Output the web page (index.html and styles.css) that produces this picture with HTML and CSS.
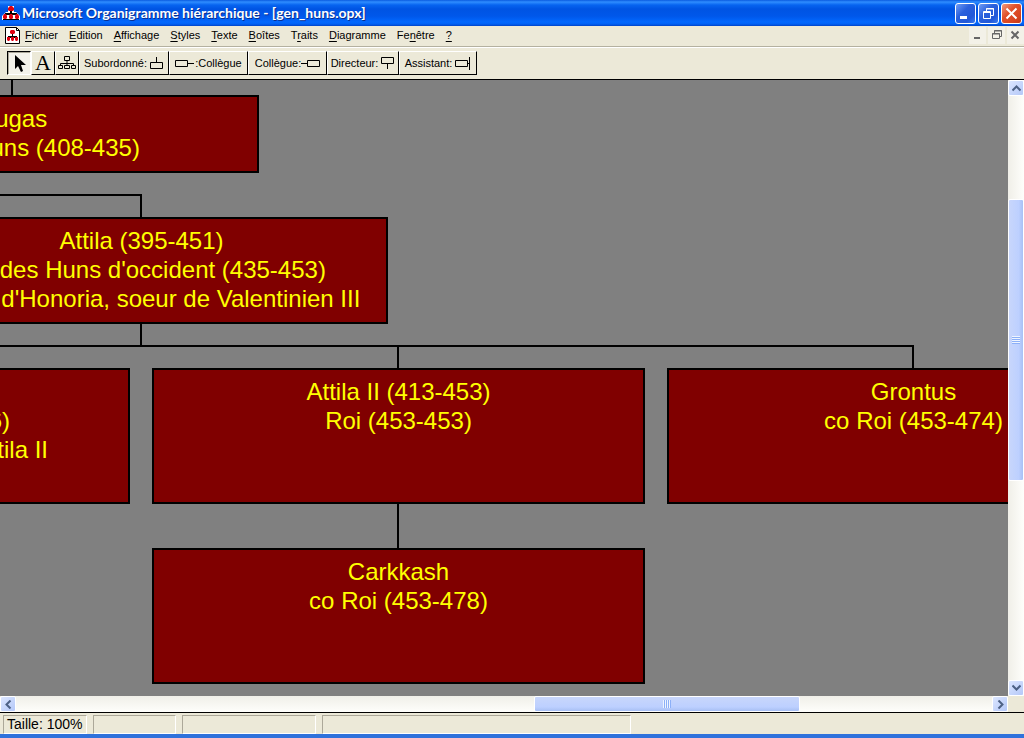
FILE: index.html
```
<!DOCTYPE html>
<html lang="fr">
<head>
<meta charset="utf-8">
<title>Microsoft Organigramme hiérarchique - [gen_huns.opx]</title>
<link rel="stylesheet" href="styles.css">
</head>
<body>
<div class="window">
  <header class="titlebar">
    <svg class="logo" width="18" height="16" viewBox="0 0 18 16">
      <path d="M6 1h6v6h2l4 4v4H0v-4l4-4h2z" fill="#fff"/>
      <path d="M8 6h2v2h5v2H3V8h5zM1 14h16v1H1z" fill="#000"/>
      <g fill="#e00010"><path d="M8 1h2l2 2v2l-1 1H7L6 5V3z"/><path d="M2 9h2l1 2v2l-1 1H2l-1-1v-2z"/><path d="M8 9h2l1 2v2l-1 1H8l-1-1v-2z"/><path d="M14 9h2l1 2v2l-1 1h-2l-1-1v-2z"/></g>
    </svg>
    <h1 class="title">Microsoft Organigramme hiérarchique - [gen_huns.opx]</h1>
    <div class="caption-buttons">
      <button class="cap" aria-label="Réduire"><svg width="19" height="19"><path d="M4 12h7v3H4z" fill="#fff"/></svg></button>
      <button class="cap" aria-label="Restaurer"><svg width="19" height="19" fill="none" stroke="#fff"><path d="M7.500 7V4.500h7v7H12M7 5h8M4 8.500h8"/><path d="M4.500 7.500h7v7h-7z"/></svg></button>
      <button class="cap cap-close" aria-label="Fermer"><svg width="19" height="19"><path d="M4.500 4.500l10 10M14.500 4.500l-10 10" stroke="#fff" stroke-width="2"/></svg></button>
    </div>
  </header>
  <nav class="menubar">
    <svg class="doc" width="15" height="17" viewBox="0 0 15 17">
      <path d="M.5.500h11l3 3v13H.5z" fill="#fff" stroke="#000"/>
      <path d="M11.500.500v3h3" fill="none" stroke="#000"/>
      <path d="M7 6h1v3h4v2H3V9h4z" fill="#000"/>
      <g fill="#e00010"><path d="M6 3h3l1 1v2l-1 1H6L5 6V4z"/><path d="M2 10h3v3l-1 1H3l-1-1z"/><path d="M6 10h3v3l-1 1H7l-1-1z"/><path d="M10 10h3v3l-1 1h-1l-1-1z"/></g>
    </svg>
    <div class="menus">
      <button class="menu"><u>F</u>ichier</button>
      <button class="menu"><u>E</u>dition</button>
      <button class="menu"><u>A</u>ffichage</button>
      <button class="menu"><u>S</u>tyles</button>
      <button class="menu"><u>T</u>exte</button>
      <button class="menu"><u>B</u>oîtes</button>
      <button class="menu">T<u>r</u>aits</button>
      <button class="menu"><u>D</u>iagramme</button>
      <button class="menu">Fe<u>n</u>être</button>
      <button class="menu"><u>?</u></button>
    </div>
    <div class="mdi-buttons">
      <button class="mdi" aria-label="Réduire le document"><svg width="16" height="16"><path d="M5 10h6v2H5z" fill="#666"/></svg></button>
      <button class="mdi" aria-label="Restaurer le document"><svg width="16" height="16" fill="none" stroke="#666"><path d="M6.500 6V3.500h7v6H12M6 4h8M4 7h8M4.500 6.500h7v5h-7z"/></svg></button>
      <button class="mdi" aria-label="Fermer le document"><svg width="16" height="16"><path d="M4.500 4.500l7 7M11.500 4.500l-7 7" stroke="#666" stroke-width="2"/></svg></button>
    </div>
  </nav>
  <div class="toolbar">
    <button class="tool tool-icon pressed" aria-label="Sélection"><svg width="20" height="20"><path d="M6 2v14l3-3 3 6 2-1-2-6h5z" fill="#000"/></svg></button>
    <button class="tool tool-icon letter">A</button>
    <button class="tool tool-icon" aria-label="Organigramme"><svg width="18" height="14" fill="none" stroke="#000"><path d="M6.500.500h5v4h-5zM.5 9.500h4v3h-4zM6.500 9.500h5v3h-5zM13.500 9.500h4v3h-4zM9 4.500v5M2.500 9.500v-2h13v2"/></svg></button>
    <button class="tool tool-sub">Subordonné:<svg width="14" height="13" fill="none" stroke="#000"><path d="M.5 5.500h12v6H.5zM6.500 0v5"/></svg></button>
    <button class="tool tool-left"><svg width="20" height="9" fill="none" stroke="#000"><path d="M.5 1.500h12v6H.5zM13 4.500h6"/></svg>:Collègue</button>
    <button class="tool tool-right">Collègue:<svg width="19" height="9" fill="none" stroke="#000"><path d="M6.500 1.500h12v6h-12zM0 4.500h6"/></svg></button>
    <button class="tool tool-dir">Directeur:<svg width="14" height="13" fill="none" stroke="#000"><path d="M.5.500h12v6H.5zM6.500 7v5"/></svg></button>
    <button class="tool tool-asst">Assistant:<svg width="16" height="13" fill="none" stroke="#000"><path d="M.5 3.500h12v6H.5zM14.500 0v13M13 6.500h2"/></svg></button>
  </div>
  <main class="workspace">
    <div class="canvas">
      <svg class="links" width="1008" height="616" fill="none" stroke="#000" stroke-width="2">
        <path d="M12 0v16M0 115h141v23M141 243v23M0 266h913v23M398 266v23M398 423v46"/>
      </svg>
      <div class="node n-rugas">Rugas<br>Roi des Huns (408-435)</div>
      <div class="node n-attila">Attila (395-451)<br>Roi des Huns d'occident (435-453)<br>Fiancé d'Honoria, soeur de Valentinien III</div>
      <div class="node tall n-brother"><br><span class="end-dates">6)</span><span class="end-name">Attila II</span></div>
      <div class="node tall n-attila2">Attila II (413-453)<br>Roi (453-453)</div>
      <div class="node tall n-grontus">Grontus<br>co Roi (453-474)</div>
      <div class="node tall n-carkkash">Carkkash<br>co Roi (453-478)</div>
    </div>
    <div class="vscroll">
      <button class="arrow" aria-label="Haut"><svg width="9" height="9"><path d="M.5 6.500l4-4 4 4" class="chev"/></svg></button>
      <div class="track-before"></div>
      <div class="thumb"><i class="grip"></i></div>
      <div class="track-after"></div>
      <button class="arrow" aria-label="Bas"><svg width="9" height="9"><path d="M.5 2.500l4 4 4-4" class="chev"/></svg></button>
    </div>
    <div class="hscroll">
      <button class="arrow" aria-label="Gauche"><svg width="9" height="9"><path d="M6.500.500l-4 4 4 4" class="chev"/></svg></button>
      <div class="track-before"></div>
      <div class="thumb"><i class="grip"></i></div>
      <div class="track-after"></div>
      <button class="arrow" aria-label="Droite"><svg width="9" height="9"><path d="M2.500.500l4 4-4 4" class="chev"/></svg></button>
    </div>
    <div class="corner"></div>
  </main>
  <footer class="statusbar">
    <div class="field f-zoom">Taille: 100%</div>
    <div class="field f-a"></div>
    <div class="field f-b"></div>
    <div class="field f-c"></div>
  </footer>
</div>
</body>
</html>
```
FILE: styles.css
```
* { box-sizing: border-box; }
body { margin: 0; font: 11px/14px "Liberation Sans", Arial, sans-serif; color: #000; }
button { font: inherit; color: inherit; border: 0; padding: 0; background: none; }
svg { display: block; flex: none; }

.window {
  display: grid;
  grid-template-rows: 26px 21px 33px 1fr 25px;
  height: 100vh;
  background: #ece9d8;
}

.titlebar {
  display: flex;
  align-items: center;
  gap: 2px;
  padding: 0 2px;
  background: linear-gradient(#0a5be0 0, #2f8dff 2px, #0764f0 5px, #0054e3 9px, #0057ea 16px, #0268fe 22px, #0161f5 24px, #0043c8 26px);
}
.title {
  flex: 1;
  margin: 0;
  font: bold 14px/16px Lato, sans-serif;
  color: #fff;
  text-shadow: 1px 1px #0a2f90;
}
.caption-buttons { display: flex; gap: 2px; }
.cap {
  width: 21px;
  height: 21px;
  border: 1px solid #fff;
  border-radius: 3px;
  background: linear-gradient(135deg, #6f9cf5, #2a60dc 40%, #2258d8 75%, #3b7cf0);
}
.cap-close { background: linear-gradient(135deg, #f09a80, #e0512b 40%, #d84420 75%, #c03a18); }

.menubar {
  display: flex;
  align-items: center;
  padding: 0 0 2px 5px;
  border-bottom: 1px solid #b4b1a0;
}
.menus { display: flex; flex: 1; gap: 11px; padding-left: 5px; }
.menu u { text-underline-offset: 2px; }
.mdi-buttons { display: flex; gap: 2px; }
.mdi { width: 17px; height: 17px; background: #f3f1e8; }

.toolbar {
  display: flex;
  padding: 3px 0 5px 7px;
  border-top: 1px solid #fff;
  border-bottom: 1px solid #000;
}
.tool {
  display: flex;
  align-items: center;
  justify-content: center;
  gap: 3px;
  height: 24px;
  border: 1px solid;
  border-color: #fff #000 #000 #fff;
}
.tool-icon { width: 24px; }
.pressed { border-color: #000 #fff #fff #000; box-shadow: inset 1px 1px #aca899; background: #f4f2ea; }
.letter { font: 22px/20px "Liberation Serif", serif; }
.tool-sub { width: 90px; }
.tool-left { width: 79px; gap: 0; }
.tool-right { width: 79px; gap: 0; }
.tool-dir { width: 72px; }
.tool-asst { width: 78px; }

.workspace {
  display: grid;
  grid-template: minmax(0, 1fr) 16px / minmax(0, 1fr) 16px;
  min-height: 0;
  border-bottom: 1px solid #000;
}
.canvas { position: relative; overflow: hidden; background: #808080; }
.links { position: absolute; left: 0; top: 0; }
.node {
  position: absolute;
  width: 493px;
  padding: 7px 0;
  border: 2px solid #000;
  background: #800000;
  color: #ff0;
  font: 24px/29px "Liberation Sans", Arial, sans-serif;
  text-align: center;
  white-space: nowrap;
}
.tall { height: 136px; }
.n-rugas { left: -234px; top: 15px; height: 78px; }
.n-attila { left: -105px; top: 137px; height: 107px; }
.n-brother { left: -363px; top: 288px; text-align: right; }
.n-attila2 { left: 152px; top: 288px; }
.n-grontus { left: 667px; top: 288px; }
.n-carkkash { left: 152px; top: 468px; }
.end-dates { display: block; padding-right: 118px; }
.end-name { display: block; padding-right: 80px; }

.vscroll, .hscroll { display: flex; background: linear-gradient(90deg, #f0efe8, #fefefb); }
.vscroll { flex-direction: column; }
.hscroll { background: linear-gradient(#f0efe8, #fefefb); }
.arrow {
  display: flex;
  align-items: center;
  justify-content: center;
  width: 16px;
  height: 16px;
  border: 1px solid #fff;
  border-radius: 2px;
  background: linear-gradient(135deg, #dce6ff, #b4c8f8);
}
.chev { fill: none; stroke: #4d6185; stroke-width: 2; }
.thumb {
  display: flex;
  align-items: center;
  justify-content: center;
  border: 1px solid #fff;
  border-radius: 2px;
}
.vscroll .thumb { flex: 281; background: linear-gradient(90deg, #c8d6fb, #bdd0ff 70%, #a8c0f4); }
.vscroll .track-before { flex: 103; }
.vscroll .track-after { flex: 200; }
.hscroll .thumb { flex: 265; background: linear-gradient(#c8d6fb, #bdd0ff 70%, #a8c0f4); }
.hscroll .track-before { flex: 519; }
.hscroll .track-after { flex: 192; }
.grip { width: 8px; height: 8px; }
.vscroll .grip { background: repeating-linear-gradient(#eef4fe 0 1px, #8cb0f8 1px 2px); }
.hscroll .grip { background: repeating-linear-gradient(90deg, #eef4fe 0 1px, #8cb0f8 1px 2px); }
.corner { background: #ece9d8; }

.statusbar {
  display: flex;
  padding: 2px 3px 0;
  border-bottom: 4px solid #2f72dc;
}
.field {
  height: 19px;
  border: 1px solid;
  border-color: #aca899 #fff #fff #aca899;
}
.f-zoom { width: 84px; padding-left: 3px; margin-right: 6px; font: 14px/17px "Liberation Sans", Arial, sans-serif; }
.f-a { width: 83px; margin-right: 6px; }
.f-b { width: 134px; margin-right: 6px; }
.f-c { width: 309px; }
```
